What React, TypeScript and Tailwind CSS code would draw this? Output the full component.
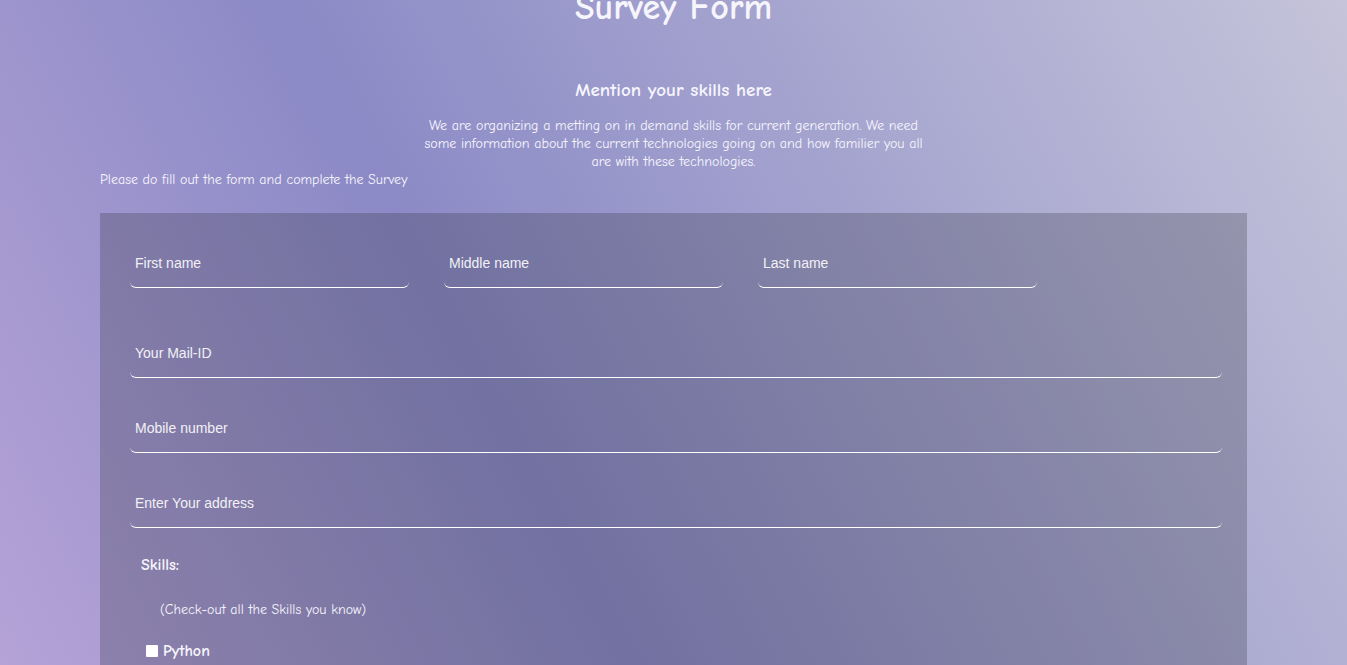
export default function App() {
  const comic = "font-['Comic_Sans_MS','Comic_Neue',Lato,sans-serif]";
  const field =
    "h-[50px] bg-transparent border-0 border-b border-white rounded-md px-[5px] text-sm text-white placeholder:text-[#f1f1f5] outline-none font-['Liberation_Sans',Arial,sans-serif]";

  return (
    <div
      className={`min-h-screen w-full overflow-hidden bg-[linear-gradient(62deg,#b6a3d7_0%,#8b8ac6_38%,#c5c4da_100%)] text-[#f6f5fc] ${comic}`}
    >
      <h1 className="text-center text-[36px] font-bold leading-[44px] mt-[-14px]">Survey Form</h1>

      <h3 className="text-center text-[19px] font-bold mt-[47px] leading-[26px]">Mention your skills here</h3>
      <p className="mx-auto mt-[14px] w-[505px] text-center text-sm font-medium leading-[18px]">
        We are organizing a metting on in demand skills for current generation. We need some information about the
        current technologies going on and how familier you all are with these technologies.
      </p>
      <p className="ml-[100px] text-sm font-medium leading-[18px] mt-[0px]">
        Please do fill out the form and complete the Survey
      </p>

      <form className="mx-[100px] mt-[24px] bg-[rgba(40,40,50,0.25)] pl-[30px] pr-[25px] pt-[25px] pb-10">
        <div className="flex gap-[35px]">
          <input className={`${field} w-[279px]`} placeholder="First name" />
          <input className={`${field} w-[279px]`} placeholder="Middle name" />
          <input className={`${field} w-[279px]`} placeholder="Last name" />
        </div>
        <div className="mt-[40px] flex flex-col gap-[25px]">
          <input className={`${field} w-full`} placeholder="Your Mail-ID" />
          <input className={`${field} w-full`} placeholder="Mobile number" />
          <input className={`${field} w-full`} placeholder="Enter Your address" />
        </div>

        <div className="mt-[26px] ml-[11px] text-base font-bold leading-[22px]">Skills:</div>
        <div className="mt-[24px] ml-[30px] text-sm font-medium leading-[20px]">(Check-out all the Skills you know)</div>
        <label className="mt-[20px] ml-[16px] flex items-center gap-[5px] text-base font-bold leading-[22px]">
          <span className="inline-block h-[12px] w-[12px] bg-white rounded-[1px]" />
          Python
        </label>
      </form>
    </div>
  );
}
